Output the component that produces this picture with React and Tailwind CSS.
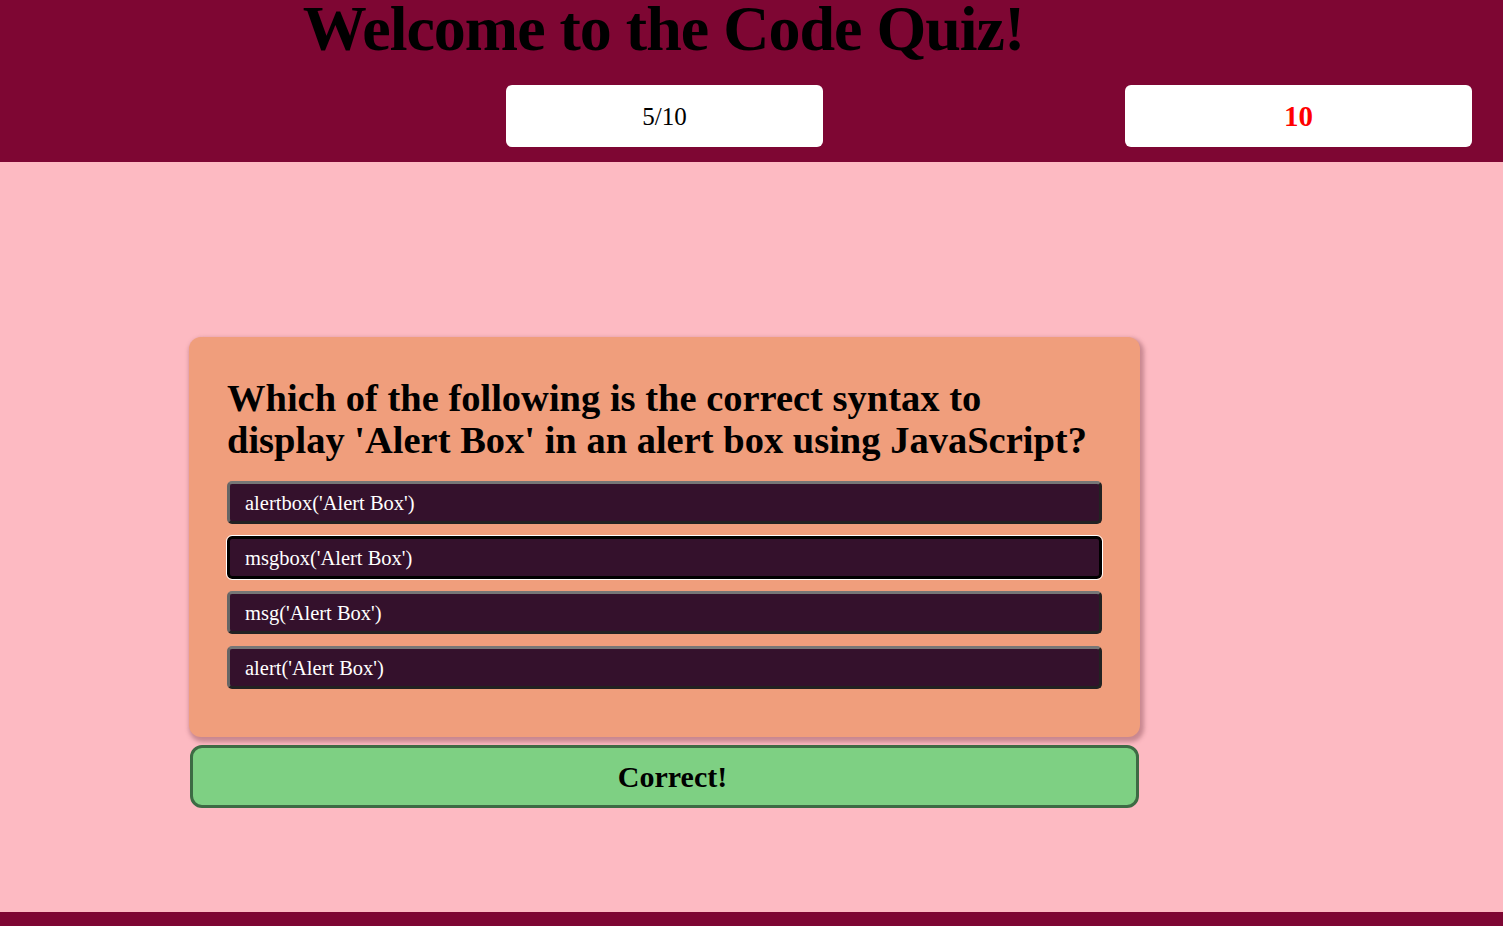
import React from 'react';

const OPTIONS = [
    "alertbox('Alert Box')",
    "msgbox('Alert Box')",
    "msg('Alert Box')",
    "alert('Alert Box')",
];

const serif = { fontFamily: '"Liberation Serif", "DejaVu Serif", serif' };

export default function App() {
    const selected = 1;

    return (
        <div className="min-h-[926px] flex flex-col bg-[#fdbac2]" style={serif}>
            {/* Header */}
            <header className="bg-[#7e0633] h-[162px] flex flex-col">
                <div className="w-[1327px] text-center h-[66px]">
                    <h1 className="text-[64px] font-bold leading-[0.9] text-black tracking-[-1px]">
                        Welcome to the Code Quiz!
                    </h1>
                </div>
                <div className="flex mt-[19px]">
                    <div className="ml-[506px] w-[317px] h-[62px] bg-white rounded-md flex items-center justify-center pt-[2px] text-[25px] text-black">
                        5/10
                    </div>
                    <div className="ml-[302px] w-[347px] h-[62px] bg-white rounded-md flex items-center justify-center pt-[2px] text-[29px] font-bold text-[#ff0000]">
                        10
                    </div>
                </div>
            </header>

            {/* Quiz */}
            <main className="flex-1 pt-[175px]">
                <div className="ml-[189px] w-[951px]">
                    <div className="bg-[#f09e7c] rounded-xl shadow-[2px_3px_4px_2px_rgba(120,60,70,0.4)] h-[400px] px-[38px] pt-[40px]">
                        <h2 className="text-[38.5px] font-bold leading-[42px] text-black">
                            Which of the following is the correct syntax to display 'Alert Box' in an alert box using JavaScript?
                        </h2>
                        <div className="mt-[20px] flex flex-col gap-[12px]">
                            {OPTIONS.map((opt, i) => (
                                <button
                                    key={opt}
                                    className={`h-[43px] w-full text-left pl-[15px] pt-[2px] text-[20.5px] text-white bg-[#34112c] rounded-[5px] border-[3px]
                                    ${i === selected
                                        ? 'border-black outline outline-1 outline-white'
                                        : 'border-t-[#777] border-l-[#666] border-b-[#222] border-r-[#222]'}`}
                                >
                                    {opt}
                                </button>
                            ))}
                        </div>
                    </div>
                    <div className="mt-[8px] ml-px w-[949px] h-[63px] bg-[#7ed083] border-[3px] border-[#3d6b44] rounded-xl flex items-center justify-center pl-[16px] text-[30px] font-bold text-black">
                        Correct!
                    </div>
                </div>
            </main>

            <footer className="bg-[#7e0633] h-[14px]" />
        </div>
    );
}
